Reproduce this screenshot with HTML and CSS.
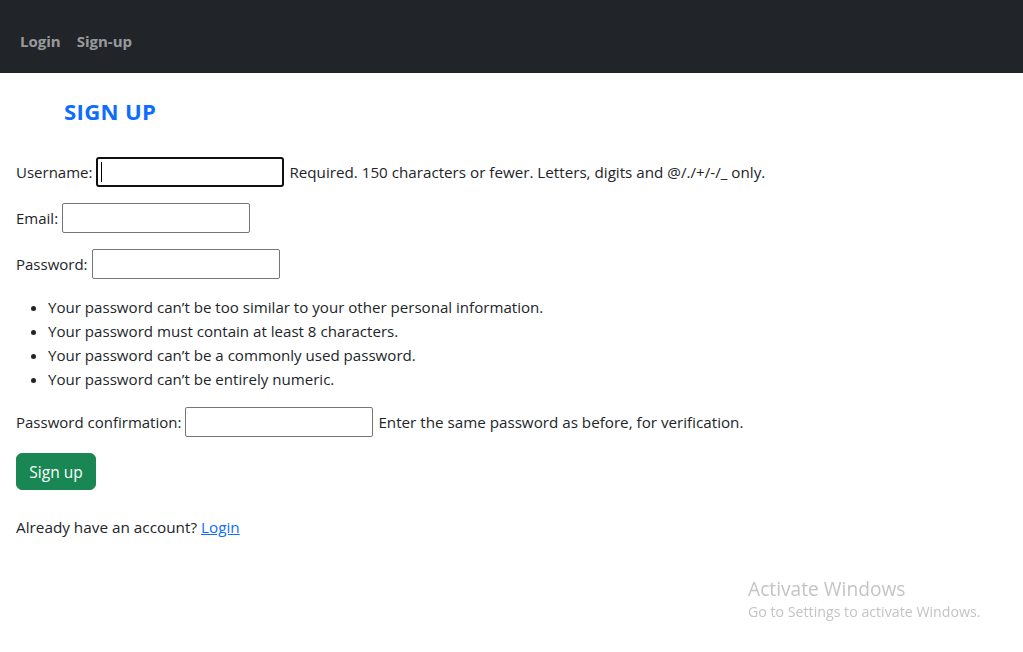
FILE: index.html
```html
<!DOCTYPE html>
<html lang="en">
<head>
<meta charset="utf-8">
<title>Sign up</title>
<link rel="stylesheet" href="styles.css">
</head>
<body>
<nav class="navbar">
  <a class="nav-link" href="#">Login</a>
  <a class="nav-link" href="#">Sign-up</a>
</nav>
<main class="content">
  <h4 class="title">SIGN UP</h4>
  <form class="form">
    <p class="row"><label>Username:</label> <input class="field field-focus" type="text"> <span class="help">Required. 150 characters or fewer. Letters, digits and @/./+/-/_ only.</span></p>
    <p class="row"><label>Email:</label> <input class="field" type="email"></p>
    <p class="row"><label>Password:</label> <input class="field" type="password"></p>
    <ul class="rules">
      <li>Your password can’t be too similar to your other personal information.</li>
      <li>Your password must contain at least 8 characters.</li>
      <li>Your password can’t be a commonly used password.</li>
      <li>Your password can’t be entirely numeric.</li>
    </ul>
    <p class="row"><label>Password confirmation:</label> <input class="field" type="password"> <span class="help">Enter the same password as before, for verification.</span></p>
    <button class="btn" type="button">Sign up</button>
  </form>
  <p class="already">Already have an account? <a href="#" class="link">Login</a></p>
</main>
<div class="watermark">
  <div class="wm-title">Activate Windows</div>
  <div class="wm-sub">Go to Settings to activate Windows.</div>
</div>
</body>
</html>
```
FILE: styles.css
```css
* { box-sizing: border-box; }
body {
  margin: 0;
  font-family: "Open Sans", "Noto Sans", sans-serif;
  font-size: 15px;
  line-height: 24px;
  color: #212529;
  background: #fff;
}
.navbar {
  height: 73px;
  background: #212529;
  display: flex;
  align-items: center;
  padding: 8px 12px 0;
}
.nav-link {
  color: rgba(255, 255, 255, 0.55);
  font-weight: 700;
  text-decoration: none;
  padding: 0 8px;
  font-size: 15px;
}
.content {
  padding: 0 16px;
}
.title {
  margin: 24px 0 0 48px;
  font-size: 22.2px;
  line-height: 30px;
  font-weight: 700;
  color: #0d6efd;
  letter-spacing: 0.3px;
}
.form {
  margin-top: 30px;
}
.row {
  margin: 0 0 16px;
  display: flex;
  align-items: center;
  height: 30px;
}
.row label {
  margin-right: 4px;
}
.field {
  width: 188px;
  height: 30px;
  border: 1px solid #767676;
  border-radius: 2px;
  padding: 1px 2px;
  font: inherit;
  background: #fff;
  margin: 0;
}
.field-focus {
  border: 2px solid #101010;
  border-radius: 3px;
  background-image: linear-gradient(#000, #000);
  background-repeat: no-repeat;
  background-position: 3px 3px;
  background-size: 1px 20px;
}
.help {
  font-size: 15.2px;
  margin-left: 5px;
}
.rules {
  margin: 0 0 16px;
  padding-left: 32px;
  font-size: 15.1px;
}
.rules li {
  line-height: 24px;
}
.btn {
  background: #198754;
  color: #fff;
  border: 1px solid #198754;
  border-radius: 6px;
  font: inherit;
  font-size: 15.5px;
  height: 37px;
  width: 80px;
  padding: 0;
  margin-top: 0;
}
.already {
  margin: 25px 0 0;
  font-size: 15.3px;
}
.link {
  color: #0d6efd;
  text-decoration: underline;
}
.watermark {
  position: fixed;
  left: 748px;
  top: 576px;
  color: #c4c4c4;
}
.wm-title {
  font-size: 19.2px;
  line-height: 26px;
}
.wm-sub {
  font-size: 14.2px;
  line-height: 20px;
}
```
